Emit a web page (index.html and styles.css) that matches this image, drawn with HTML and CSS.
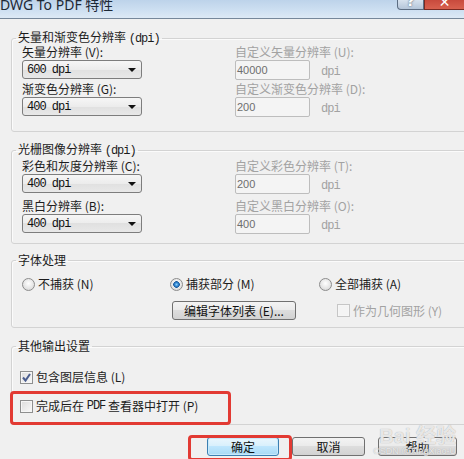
FILE: index.html
```html
<!DOCTYPE html>
<html>

<head>
    <meta charset="utf-8">
    <title>DWG To PDF 特性</title>
    <link rel="stylesheet" href="styles.css">
</head>

<body>
    <div class="dlg">
        <div class="titlebar">
            <span class="title">DWG To PDF 特性</span>
            <span class="tb-help">?</span>
            <span class="tb-close">✕</span>
        </div>

        <div class="content">
            <fieldset class="group g1">
                <legend>矢量和渐变色分辨率 <span class="m">(dpi)</span></legend>
                <div class="cols">
                    <div class="col">
                        <div class="lbl">矢量分辨率 (V):</div>
                        <div class="combo"><span class="m">600 dpi</span><i class="arrow"></i></div>
                        <div class="lbl">渐变色分辨率 (G):</div>
                        <div class="combo"><span class="m">400 dpi</span><i class="arrow"></i></div>
                    </div>
                    <div class="col off">
                        <div class="lbl">自定义矢量分辨率 (U):</div>
                        <div class="combo inrow"><span class="tb">40000</span><span class="m unit">dpi</span></div>
                        <div class="lbl">自定义渐变色分辨率 (D):</div>
                        <div class="combo inrow"><span class="tb">200</span><span class="m unit">dpi</span></div>
                    </div>
                </div>
            </fieldset>

            <fieldset class="group g2">
                <legend>光栅图像分辨率 <span class="m">(dpi)</span></legend>
                <div class="cols">
                    <div class="col">
                        <div class="lbl">彩色和灰度分辨率 (C):</div>
                        <div class="combo"><span class="m">400 dpi</span><i class="arrow"></i></div>
                        <div class="lbl">黑白分辨率 (B):</div>
                        <div class="combo"><span class="m">400 dpi</span><i class="arrow"></i></div>
                    </div>
                    <div class="col off">
                        <div class="lbl">自定义彩色分辨率 (T):</div>
                        <div class="combo inrow"><span class="tb">200</span><span class="m unit">dpi</span></div>
                        <div class="lbl">自定义黑白分辨率 (O):</div>
                        <div class="combo inrow"><span class="tb">400</span><span class="m unit">dpi</span></div>
                    </div>
                </div>
            </fieldset>

            <fieldset class="group g3">
                <legend>字体处理</legend>
                <div class="opts">
                    <div class="opt"><i class="radio"></i>不捕获 (N)</div>
                    <div class="opt"><i class="radio on"></i>捕获部分 (M)</div>
                    <div class="opt"><i class="radio"></i>全部捕获 (A)</div>
                    <div></div>
                    <div class="btn wide">编辑字体列表 (E)...</div>
                    <div class="opt geo off"><i class="check dis"></i>作为几何图形 (Y)</div>
                </div>
            </fieldset>

            <fieldset class="group g4">
                <legend>其他输出设置</legend>
                <div class="opt chk first">
                    <i class="check"><svg width="11" height="11" viewBox="0 0 11 11"><path d="M2 5.5 L4.5 8.5 L9 2" fill="none" stroke="#4a5d8e" stroke-width="2"/></svg></i>包含图层信息 (L)
                </div>
                <div class="opt chk second mark">
                    <i class="check"></i>完成后在&nbsp;<span class="m">PDF</span>&nbsp;查看器中打开 (P)
                </div>
            </fieldset>

            <div class="buttons">
                <div class="btn default mark">确定</div>
                <div class="btn">取消</div>
                <div class="btn">帮助</div>
            </div>
        </div>

        <div class="watermark">
            <span class="wm-big">Bai 经验</span>
            <span class="wm-small">CSDN @XingXiao-U</span>
        </div>
    </div>
</body>

</html>
```

FILE: styles.css
```css
* {
    margin: 0;
    padding: 0;
    box-sizing: border-box;
}

html,
body {
    background: #f0f0f0;
}

body {
    width: 464px;
    height: 459px;
    overflow: hidden;
    font: 12px/12px "Noto Sans CJK SC", sans-serif;
    color: #1c1c1c;
}

.dlg {
    position: relative;
    height: 459px;
}

.m {
    font-family: "Liberation Mono", monospace;
    font-size: 12px;
    letter-spacing: -1px;
}

/* title bar */
.titlebar {
    display: flex;
    height: 19px;
    border-bottom: 1px solid #76879a;
    background: linear-gradient(180deg, #bdd3ea 0%, #cddff1 55%, #dde9f5 100%);
}

.title {
    font: 14px/12px "Noto Sans", "Noto Sans CJK SC", sans-serif;
    color: #1d2835;
    margin-top: -1px;
}

.tb-help,
.tb-close {
    height: 10px;
    overflow: hidden;
    text-align: center;
    color: #fff;
    font: bold 14px/10px "DejaVu Sans", sans-serif;
}

.tb-help {
    margin-left: auto;
    width: 27px;
    border: 1px solid #5c6d82;
    border-top: 0;
    border-radius: 0 0 0 4px;
    background: linear-gradient(#d7e2ee, #b4c5d9);
    text-shadow: 0 0 2px #33475e;
    line-height: 2px;
}

.tb-close {
    width: 40px;
    border: 1px solid #7a2a22;
    border-top: 0;
    border-right: 0;
    background: linear-gradient(#c84a3d, #d8614f);
    line-height: 4px;
}

/* groups */
.content {
    padding-left: 11px;
}

.group {
    margin: 0 -8px 0 0;
    padding: 0 0 0 10px;
    border: 1px solid #d3d3d3;
    border-radius: 3px;
    box-shadow: inset 1px 1px 0 #fbfbfb;
    min-width: 0;
}

.group legend {
    margin-left: -6px;
    padding: 0 2px;
    line-height: 12px;
}

.g1 {
    margin-top: 12px;
    padding-bottom: 15px;
}

.g1 .col > .lbl:first-child {
    margin-top: 1px;
}

.g2 {
    margin-top: 11px;
    padding-bottom: 10px;
}

.g3 {
    margin-top: 10px;
    padding-bottom: 7px;
}

.g4 {
    margin-top: 12px;
    padding-bottom: 11px;
}

.cols {
    display: grid;
    grid-template-columns: 213px 1fr;
}

.col {
    display: flex;
    flex-direction: column;
}

.lbl {
    height: 12px;
    margin-bottom: 2px;
    white-space: nowrap;
}

.combo + .lbl {
    margin-top: 4px;
}

.g2 .col > .lbl:first-child {
    margin-top: 3px;
}

.g2 .combo + .lbl {
    margin-top: 7px;
}

.off {
    color: #a2a2a2;
}

.combo {
    display: flex;
    align-items: center;
    width: 120px;
    height: 19px;
    padding: 0 5px 0 4px;
    border: 1px solid #7d7d7d;
    border-radius: 3px;
    background: linear-gradient(#f6f6f6, #ececec 50%, #e0e0e0 50%, #e8e8e8);
    color: #111;
}

.arrow {
    margin-left: auto;
    width: 0;
    height: 0;
    border-left: 4px solid transparent;
    border-right: 4px solid transparent;
    border-top: 4px solid #111;
}

.inrow {
    width: auto;
    padding: 0;
    border: 0;
    background: none;
    color: #a2a2a2;
}

.tb {
    display: flex;
    align-items: center;
    width: 75px;
    height: 20px;
    padding-left: 1px;
    border: 1px solid #bdbdbd;
    border-radius: 2px;
    background: #f4f4f4;
    color: #6e6e6e;
    font: 11px "Liberation Sans", sans-serif;
}

.unit {
    margin-left: 11px;
    margin-top: 4px;
}

/* font group */
.opts {
    display: grid;
    grid-template-columns: 148px 149px 1fr;
    grid-template-rows: 14px 19px;
    row-gap: 10px;
    margin-top: 11px;
    align-items: center;
}

.opt {
    display: flex;
    align-items: center;
    height: 14px;
    line-height: 14px;
    white-space: nowrap;
}

.radio {
    width: 13px;
    height: 13px;
    margin-right: 3px;
    border: 1px solid #8c8c8c;
    border-radius: 50%;
    background: radial-gradient(circle at 50% 40%, #ffffff, #e4e4e4 60%, #cfcfcf);
}

.radio.on {
    background:
        radial-gradient(circle, #8fd0f8 0, #2f86d3 1.8px, #1a5a9c 3px, transparent 3.6px),
        radial-gradient(circle at 50% 40%, #ffffff, #e4e4e4 60%, #cfcfcf);
}

.wide {
    width: 124px;
    margin-left: 2px;
}

.geo {
    margin-left: 18px;
}

.check {
    width: 13px;
    height: 13px;
    margin-right: 3px;
    border: 1px solid #8e8f8f;
    background: linear-gradient(135deg, #dcdcdc, #fafafa);
    box-shadow: inset 0 0 0 1px #f6f6f6;
}

.check svg {
    display: block;
}

.check.dis {
    border-color: #c6c6c6;
    background: #f4f4f4;
}

.chk {
    margin-left: -2px;
}

.chk.first {
    margin-top: 18px;
}

.chk.second {
    margin-top: 15px;
}

/* red annotation boxes */
.mark {
    position: relative;
}

.mark::after {
    content: "";
    position: absolute;
    box-sizing: border-box;
    border: 3px solid #e23a33;
    border-radius: 4px;
}

.chk.mark::after {
    left: -10px;
    top: -8px;
    width: 221px;
    height: 34px;
}

.btn.mark::after {
    left: -20px;
    top: -3px;
    width: 104px;
    height: 26px;
}

/* buttons */
.btn {
    display: flex;
    align-items: center;
    justify-content: center;
    height: 19px;
    border: 1px solid #707070;
    border-radius: 3px;
    background: linear-gradient(#f3f3f3, #ebebeb 45%, #dddddd 50%, #d2d2d2);
    color: #111;
    white-space: nowrap;
}

.btn.default {
    border-color: #3c7fb1;
    background: linear-gradient(#eaf6fd, #d9f0fc 45%, #bee6fd 50%, #a9daf5);
    box-shadow: inset 0 0 0 1px #c8eafc;
}

.buttons {
    display: grid;
    grid-template-columns: 72px 73px 79px;
    column-gap: 13px;
    margin-top: 12px;
    padding-left: 196px;
}

/* watermark */
.watermark {
    position: absolute;
    right: 8px;
    bottom: 3px;
    display: flex;
    flex-direction: column;
    align-items: flex-end;
    color: rgba(255, 255, 255, 0.75);
    text-shadow: 0 0 1px #9a9a9a;
}

.wm-big {
    font: bold 20px/20px "Liberation Sans", "Noto Sans CJK SC", sans-serif;
}

.wm-small {
    font: 9px/10px "Liberation Sans", sans-serif;
}
```
